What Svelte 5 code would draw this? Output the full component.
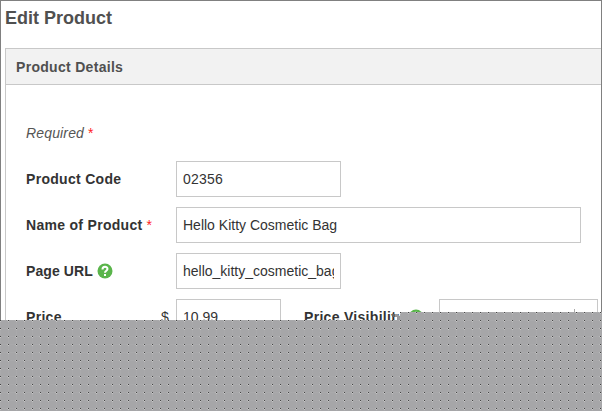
<script lang="ts">
	let code = $state('02356');
	let name = $state('Hello Kitty Cosmetic Bag');
	let url = $state('hello_kitty_cosmetic_bag');
	let price = $state('10.99');
</script>

{#snippet help()}
	<svg class="help" viewBox="0 0 16 16" aria-hidden="true">
		<circle cx="8" cy="8" r="7.5" />
		<path d="M5.5 6.4C5.5 3 10.5 3.1 10.5 6C10.5 7.7 8 7.7 8 9.7" />
		<path d="M8 11v2" />
	</svg>
{/snippet}

<main>
	<h1>Edit Product</h1>
	<section class="panel">
		<h2>Product Details</h2>
		<form>
			<p class="required">Required <span class="star">*</span></p>
			<div class="row">
				<label for="code">Product Code</label>
				<input id="code" bind:value={code} />
			</div>
			<div class="row">
				<label for="name">Name of Product <span class="star">*</span></label>
				<input id="name" class="wide" bind:value={name} />
			</div>
			<div class="row">
				<label class="tight" for="url">Page URL {@render help()}</label>
				<input id="url" bind:value={url} />
			</div>
			<div class="row">
				<label for="price">Price <span class="currency">$</span></label>
				<input id="price" class="short" bind:value={price} />
				<label class="visibility" for="visibility">Price Visibility {@render help()}</label>
				<div id="visibility" class="select"><span class="divider"></span></div>
			</div>
		</form>
	</section>
	<svg class="cover" viewBox="0 0 602 99" aria-hidden="true">
		<defs>
			<pattern id="dots" width="8" height="8" patternUnits="userSpaceOnUse">
				<rect width="8" height="8" fill="#a6a6a8" />
				<rect width="8" height="1" fill="#a9a9ab" />
				<rect width="1" height="8" fill="#a9a9ab" />
				<rect width="1" height="1" fill="#444" />
				<rect y="1" width="1" height="1" fill="#c8c8c8" />
				<rect x="7" width="1" height="1" fill="#bcbcbc" />
			</pattern>
		</defs>
		<path d="M0 8H400V0H602V99H0Z" fill="url(#dots)" />
		<path d="M392 2h3v3h-3z" fill="#666" />
		<path d="M395 2h3l2 3v3h-3v-3h-2z" fill="#99999c" />
	</svg>
</main>

<style>
	:global(body) {
		overflow: hidden;
	}

	main {
		position: relative;
		box-sizing: border-box;
		width: 602px;
		height: 411px;
		padding-left: 4px;
		border: 1px solid #808080;
		background: #fff;
		color: #333;
		font: 14px/20px 'Liberation Sans', Arial, sans-serif;
	}

	h1 {
		height: 47px;
		margin: 0;
		box-sizing: border-box;
		padding-top: 7px;
		color: #505050;
		font-size: 18px;
		line-height: 21px;
	}

	.panel {
		border: 1px solid #c8c8c8;
		border-right: 0;
	}

	h2 {
		height: 35px;
		margin: 0;
		padding-left: 10px;
		border-bottom: 1px solid #c8c8c8;
		background: #f2f2f2;
		color: #505050;
		font-size: 14px;
		line-height: 36px;
		letter-spacing: 0.3px;
	}

	form {
		display: flex;
		flex-direction: column;
		gap: 10px;
		padding: 38px 0 0 20px;
	}

	.required {
		height: 28px;
		margin: 0;
		color: #555;
		font-style: italic;
		letter-spacing: 0.15px;
	}

	.star {
		color: #f22;
		font-weight: normal;
		font-style: normal;
	}

	.row {
		display: flex;
		align-items: center;
		height: 36px;
	}

	label {
		display: flex;
		align-items: center;
		gap: 4px;
		width: 150px;
		font-weight: bold;
		letter-spacing: 0.3px;
		white-space: nowrap;
	}

	.tight {
		letter-spacing: 0.1px;
	}

	input,
	.select {
		box-sizing: border-box;
		width: 165px;
		height: 36px;
		padding: 0 6px;
		border: 1px solid #c8c8c8;
		border-radius: 0;
		outline: 0;
		background: #fff;
		color: #333;
		font: inherit;
	}

	.wide {
		width: 405px;
	}

	.short {
		width: 105px;
	}

	#code {
		letter-spacing: 0.2px;
	}

	.currency {
		margin: 0 7px 0 auto;
		font-weight: normal;
	}

	.visibility {
		width: 135px;
		padding-left: 23px;
	}

	.select {
		display: flex;
		justify-content: flex-end;
		width: 159px;
		padding-right: 22px;
	}

	.divider {
		width: 1px;
		height: 20px;
		margin-top: 9px;
		background: #aaa;
	}

	.help {
		width: 16px;
		height: 16px;
		fill: none;
		stroke: #fff;
		stroke-width: 2;
	}

	.help circle {
		fill: #5ab54b;
		stroke: none;
	}

	/* Dotted canvas over the lower part of the form */
	.cover {
		position: absolute;
		top: 311px;
		left: -1px;
		width: 602px;
		height: 99px;
		shape-rendering: crispEdges;
	}
</style>
